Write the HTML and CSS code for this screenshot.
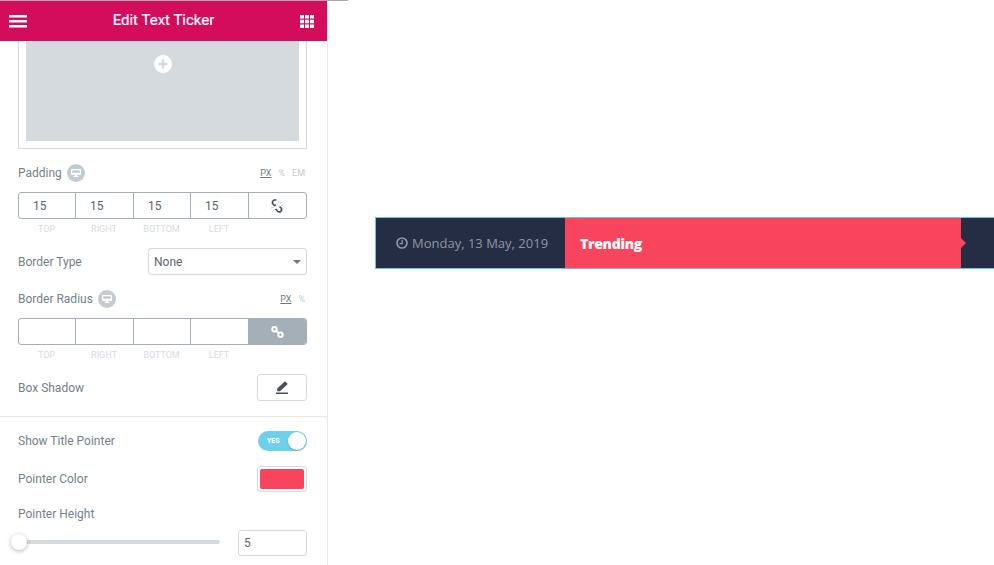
FILE: index.html
```html
<!DOCTYPE html>
<html lang="en">
<head>
  <meta charset="UTF-8" />
  <title>Edit Text Ticker</title>
  <link rel="stylesheet" href="styles.css">
</head>
<body>
  <div class="top-line"></div>
  <div class="app">
    <!-- Editor side panel -->
    <aside class="panel">
      <header class="panel-header">
        <svg class="icon-menu" width="18" height="13" viewBox="0 0 18 13"><path d="M0 0h18v2.600H0zM0 5h18v2.600H0zM0 10h18v2.600H0z" fill="#fff"/></svg>
        <h1>Edit Text Ticker</h1>
        <svg class="icon-grid" width="14" height="13" viewBox="0 0 14 13" fill="#fff"><path d="M0 0h4v3.500H0zM5 0h4v3.500H5zM10 0h4v3.500h-4zM0 4.700h4v3.600H0zM5 4.700h4v3.600H5zM10 4.700h4v3.600h-4zM0 9.500h4V13H0zM5 9.500h4V13H5zM10 9.500h4V13h-4z"/></svg>
      </header>

      <div class="panel-body">
        <div class="media-box">
          <div class="media-fill">
            <svg class="media-add" width="18" height="18" viewBox="0 0 18 18"><circle cx="9" cy="9" r="9" fill="#fff"/><path d="M7.700 4.500h2.600v3.200h3.200v2.600h-3.200v3.200H7.700v-3.200H4.500V7.700h3.200z" fill="#d5dadf"/></svg>
          </div>
        </div>

        <div class="label-row padding-label">
          <span class="label">Padding</span>
          <span class="device"><svg width="10" height="8" viewBox="0 0 10 8"><path d="M1 0h8a1 1 0 0 1 1 1v4a1 1 0 0 1-1 1H6v1h1.500v1h-5V7H4V6H1a1 1 0 0 1-1-1V1a1 1 0 0 1 1-1zM1.200 1.200v2.600h7.600V1.200z" fill="#fff" fill-rule="evenodd"/></svg></span>
          <span class="units"><u>PX</u><span>%</span><span>EM</span></span>
        </div>
        <div class="dims">
          <div class="dim">15</div><div class="dim">15</div><div class="dim">15</div><div class="dim">15</div>
          <div class="dim link">
            <svg width="14" height="14" viewBox="0 0 14 14" fill="none"><path d="M5.500 1 3 1 1.500 2.500 1.500 4.500 3.500 6.500 5 6M8.500 7.500 10.500 9.500 10.500 11.500 9 13 7 12.500 4.500 10" stroke="#495157" stroke-width="1.700"/><path d="M8 1.500 7.500 4M10.500 3 9 5M12 6 10 6.500M0 9 2.500 8.500M1.500 12 3.500 10.500" stroke="#c5cbd0"/></svg>
          </div>
        </div>
        <div class="dim-labels"><span>TOP</span><span>RIGHT</span><span>BOTTOM</span><span>LEFT</span></div>

        <div class="control-row border-type">
          <span class="label">Border Type</span>
          <div class="select">None<i class="caret"></i></div>
        </div>

        <div class="label-row radius-label">
          <span class="label">Border Radius</span>
          <span class="device"><svg width="10" height="8" viewBox="0 0 10 8"><path d="M1 0h8a1 1 0 0 1 1 1v4a1 1 0 0 1-1 1H6v1h1.500v1h-5V7H4V6H1a1 1 0 0 1-1-1V1a1 1 0 0 1 1-1zM1.200 1.200v2.600h7.600V1.200z" fill="#fff" fill-rule="evenodd"/></svg></span>
          <span class="units"><u>PX</u><span>%</span></span>
        </div>
        <div class="dims">
          <div class="dim"></div><div class="dim"></div><div class="dim"></div><div class="dim"></div>
          <div class="dim link linked">
            <svg width="13" height="12" viewBox="0 0 13 12" fill="none" stroke="#fff" stroke-width="2"><circle cx="3.500" cy="3.200" r="2.200"/><circle cx="9.500" cy="8.800" r="2.200"/><path d="M5 4.800 8 7.200"/></svg>
          </div>
        </div>
        <div class="dim-labels"><span>TOP</span><span>RIGHT</span><span>BOTTOM</span><span>LEFT</span></div>

        <div class="control-row box-shadow">
          <span class="label">Box Shadow</span>
          <div class="edit-btn">
            <svg width="12" height="13" viewBox="0 0 12 13"><path d="M9 .2 11.800 3 4 10.200H1.200V7.400zM0 11.600h12V13H0z" fill="#495157"/></svg>
          </div>
        </div>
      </div>

      <div class="section">
        <div class="control-row pointer-toggle">
          <span class="label">Show Title Pointer</span>
          <div class="switch"><span class="switch-text">YES</span><i class="switch-knob"></i></div>
        </div>
        <div class="control-row pointer-color">
          <span class="label">Pointer Color</span>
          <div class="swatch"><i></i></div>
        </div>
        <div class="label pointer-height">Pointer Height</div>
        <div class="slider-row">
          <div class="slider"><i class="slider-knob"></i></div>
          <div class="number">5</div>
        </div>
      </div>
    </aside>

    <!-- Preview area -->
    <main class="preview">
      <div class="ticker">
        <div class="ticker-date">
          <svg width="12" height="12" viewBox="0 0 12 12" fill="none" stroke="#8f95a6"><circle cx="6" cy="6" r="5" stroke-width="1.700"/><path d="M6.200 2.800V6.600H3.500" stroke-width="1.300"/></svg>
          <span>Monday, 13 May, 2019</span>
        </div>
        <div class="ticker-title">Trending<i class="ticker-pointer"></i></div>
        <div class="ticker-rest"></div>
      </div>
    </main>
  </div>
</body>
</html>
```

FILE: styles.css
```css
/* Page */
body {
  margin: 0;
  height: 565px;
  overflow: hidden;
  background: #fff;
  font-family: Roboto, sans-serif;
}

.top-line {
  width: 348px;
  height: 1px;
  background: #aaa;
}

.app {
  display: flex;
  height: 564px;
}

/* Side panel */
.panel {
  width: 327px;
  flex-shrink: 0;
  overflow: hidden;
  border-right: 1px solid #e6e9ec;
}

.panel-header {
  height: 40px;
  display: flex;
  align-items: center;
  justify-content: space-between;
  padding: 0 13px 0 9px;
  background: #d30c5c;
}

.panel-header h1 {
  margin: 0 0 2px;
  font-size: 15px;
  font-weight: 400;
  -webkit-text-stroke: 0.2px #fff;
  color: #fff;
}

.panel-body {
  padding: 0 20px 15px 18px;
  border-bottom: 1px solid #e6e9ec;
}

.label {
  font-size: 12px;
  color: #747f89;
}

/* Media placeholder */
.media-box {
  height: 100px;
  padding: 0 7px 7px;
  border: 1px solid #d5dadf;
  border-top: none;
}

.media-fill {
  height: 100px;
  display: flex;
  justify-content: center;
  padding-top: 14px;
  box-sizing: border-box;
  background: #d5dadf;
}

/* Label rows with responsive icon and units */
.label-row {
  display: flex;
  align-items: center;
  gap: 5px;
}

.padding-label {
  margin-top: 15px;
  height: 18px;
  margin-bottom: 10px;
}

.radius-label {
  margin-top: 15px;
  height: 18px;
  margin-bottom: 10px;
}

.device {
  width: 18px;
  height: 18px;
  display: flex;
  align-items: center;
  justify-content: center;
  border-radius: 50%;
  background: #c2cbd2;
}

.units {
  margin-left: auto;
  margin-right: 2px;
  display: flex;
  gap: 7px;
  font-size: 9px;
  color: #c2cbd2;
}

.units u {
  color: #6d7882;
}

/* Four-sided inputs */
.dims {
  display: grid;
  grid-template-columns: 57px 58px 57px 58px 1fr;
  height: 27px;
  box-sizing: border-box;
  border: 1px solid #a4afb7;
  border-radius: 3px;
  overflow: hidden;
}

.dim {
  display: flex;
  align-items: center;
  padding-left: 14px;
  font-size: 12px;
  color: #5b656e;
  border-right: 1px solid #a4afb7;
}

.dim.link {
  justify-content: center;
  padding-left: 0;
  border-right: none;
}

.dim.linked {
  background: #a4afb7;
}

.dim-labels {
  display: grid;
  grid-template-columns: 57px 58px 57px 58px 1fr;
  margin-top: 5px;
  font-size: 9px;
  line-height: 11px;
  color: #d5dadf;
  text-align: center;
}

/* Generic control rows */
.control-row {
  display: flex;
  align-items: center;
  justify-content: space-between;
}

.border-type {
  margin-top: 13px;
}

.select {
  width: 159px;
  height: 27px;
  box-sizing: border-box;
  display: flex;
  align-items: center;
  justify-content: space-between;
  padding: 0 5px;
  border: 1px solid #d5dadf;
  border-radius: 3px;
  font-size: 12px;
  color: #5b656e;
}

.caret {
  width: 0;
  height: 0;
  border-left: 4px solid transparent;
  border-right: 4px solid transparent;
  border-top: 4px solid #6d7882;
}

.box-shadow {
  margin-top: 13px;
}

.edit-btn {
  width: 50px;
  height: 27px;
  box-sizing: border-box;
  display: flex;
  align-items: center;
  justify-content: center;
  border: 1px solid #d5dadf;
  border-radius: 3px;
}

/* Lower section */
.section {
  padding: 14px 20px 0 18px;
}

.switch {
  position: relative;
  width: 49px;
  height: 20px;
  box-sizing: border-box;
  padding-left: 9px;
  border-radius: 10px;
  background: #6ed0ec;
  line-height: 20px;
}

.switch-text {
  display: block;
  font-size: 7px;
  font-weight: 700;
  color: #fff;
}

.switch-knob {
  position: absolute;
  top: 1px;
  right: 1px;
  width: 18px;
  height: 18px;
  border-radius: 50%;
  background: #fff;
  box-shadow: 0 1px 2px rgba(0, 0, 0, 0.2);
}

.pointer-color {
  margin-top: 15px;
}

.swatch {
  width: 50px;
  height: 26px;
  box-sizing: border-box;
  padding: 2px;
  border: 1px solid #d5dadf;
  border-radius: 3px;
}

.swatch i {
  display: block;
  height: 100%;
  border-radius: 2px;
  background: #f8445c;
}

.pointer-height {
  margin-top: 15px;
  line-height: 14px;
}

.slider-row {
  display: flex;
  align-items: center;
  justify-content: space-between;
  margin-top: 9px;
}

.slider {
  position: relative;
  width: 202px;
  height: 4px;
  margin-bottom: 2px;
  border-radius: 2px;
  background: #d5dadf;
}

.slider-knob {
  position: absolute;
  top: -6px;
  left: -7px;
  width: 16px;
  height: 16px;
  border-radius: 50%;
  background: #fff;
  box-shadow: 0 1px 4px rgba(0, 0, 0, 0.3);
}

.number {
  width: 69px;
  height: 26px;
  box-sizing: border-box;
  display: flex;
  align-items: center;
  padding-left: 5px;
  border: 1px solid #d5dadf;
  border-radius: 3px;
  font-size: 12px;
  color: #5b656e;
}

/* Preview ticker */
.preview {
  flex: 1;
  min-width: 0;
  padding: 216px 0 0 47px;
}

.ticker {
  display: flex;
  height: 52px;
  box-sizing: border-box;
  border: 1px solid #6ec1e4;
  border-right: none;
  background: #252d44;
}

.ticker-date {
  width: 189px;
  flex-shrink: 0;
  display: flex;
  align-items: center;
  gap: 4px;
  padding-left: 20px;
  box-sizing: border-box;
  font-family: "Open Sans", sans-serif;
  font-size: 13px;
  color: #8f95a6;
}

.ticker-title {
  position: relative;
  width: 396px;
  flex-shrink: 0;
  display: flex;
  align-items: center;
  padding-left: 15px;
  box-sizing: border-box;
  background: #f8445c;
  font-family: "Open Sans", sans-serif;
  font-size: 14px;
  font-weight: 800;
  letter-spacing: -0.3px;
  color: #fff;
}

.ticker-pointer {
  position: absolute;
  top: 50%;
  left: 100%;
  margin-top: -5px;
  border-left: 5px solid #f8445c;
  border-top: 5px solid transparent;
  border-bottom: 5px solid transparent;
}

.ticker-rest {
  flex: 1;
}
```
